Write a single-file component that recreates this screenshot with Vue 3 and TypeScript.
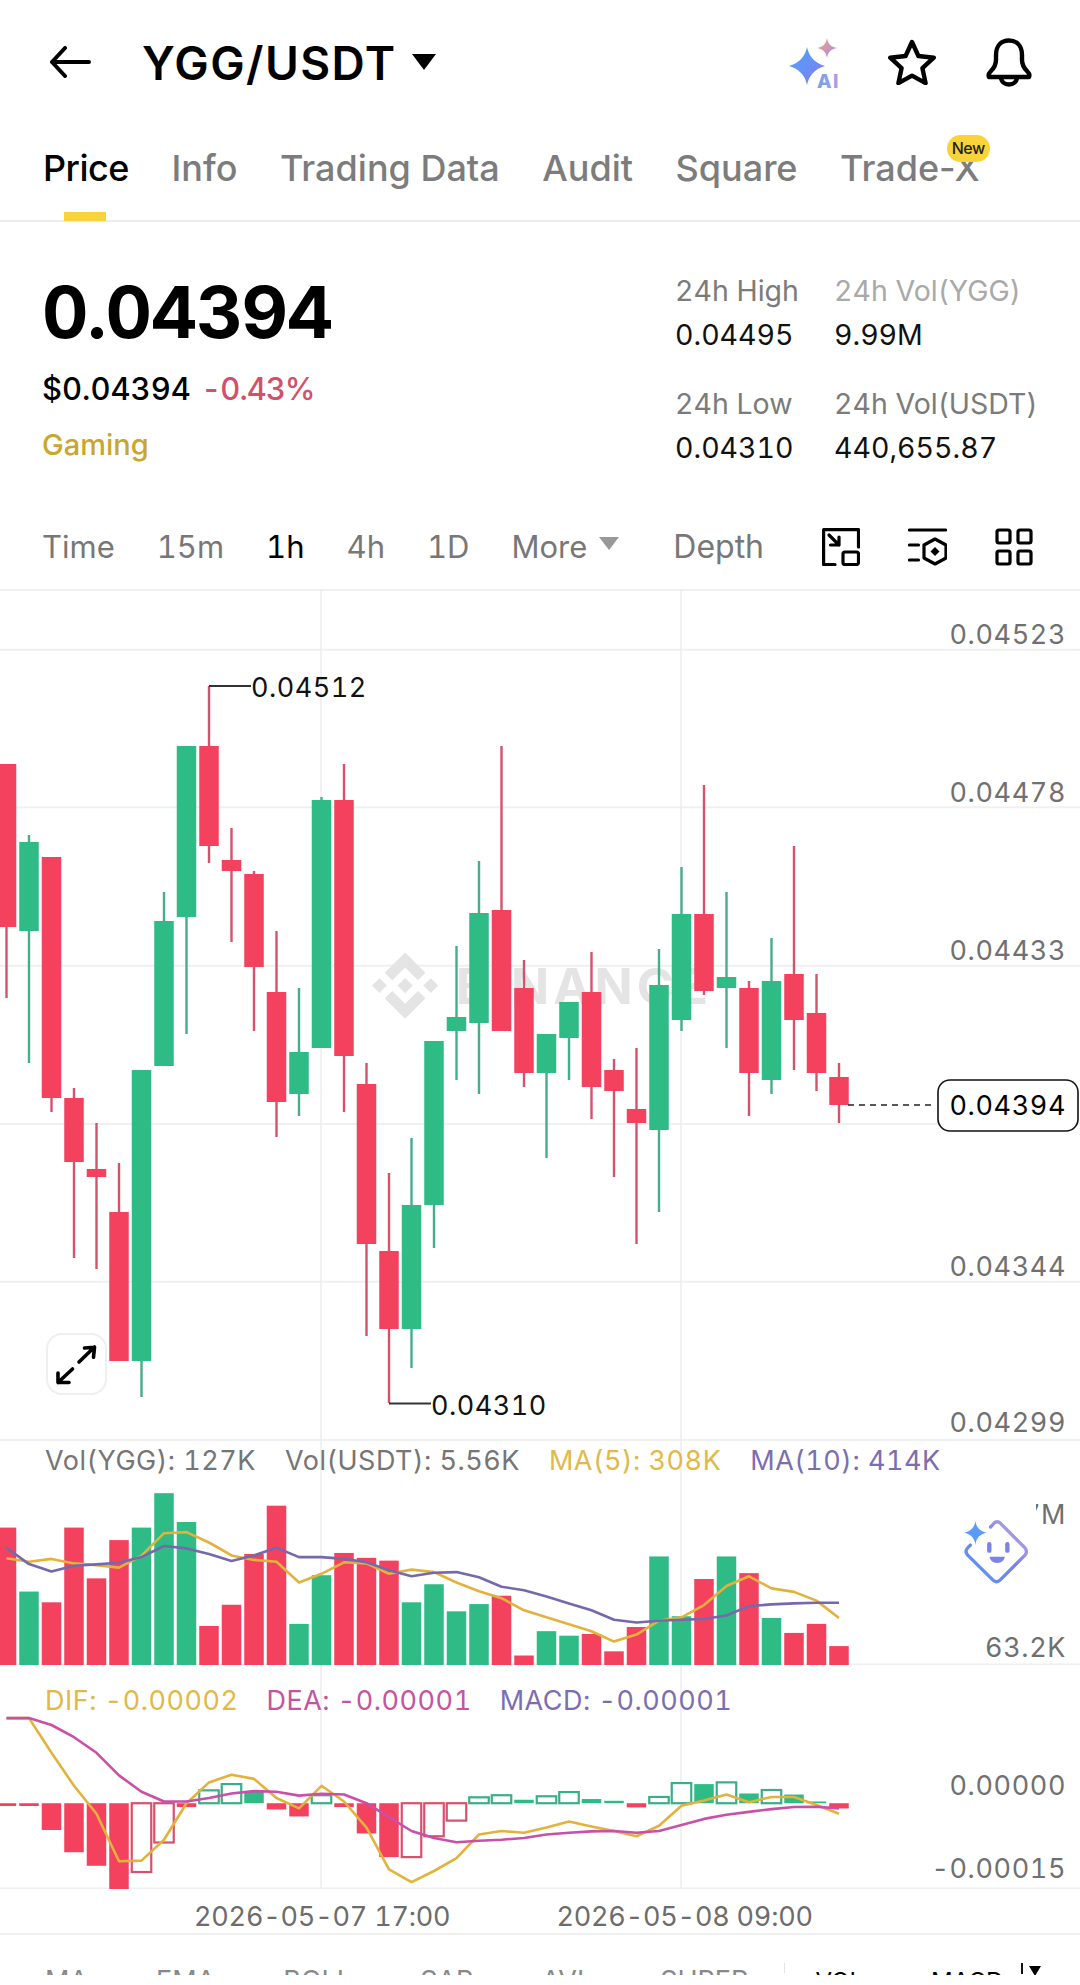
<script setup lang="ts">
  // [isUp, wickTop, bodyTop, bodyBottom, wickBottom], page y coordinates
  type Candle = [boolean, number, number, number, number]

  const candles: Candle[] = [
    [false, 764, 764, 927, 998],
    [true, 835, 842, 931, 1063],
    [false, 857, 857, 1098, 1112],
    [false, 1088, 1098, 1162, 1258],
    [false, 1123, 1169, 1177, 1269],
    [false, 1163, 1212, 1361, 1361],
    [true, 1070, 1070, 1361, 1397],
    [true, 892, 921, 1066, 1066],
    [true, 746, 746, 917, 1034],
    [false, 686, 746, 846, 863],
    [false, 828, 860, 871, 942],
    [false, 871, 874, 967, 1031],
    [false, 931, 992, 1102, 1137],
    [true, 988, 1052, 1094, 1116],
    [true, 797, 800, 1048, 1048],
    [false, 764, 800, 1056, 1112],
    [false, 1063, 1084, 1244, 1336],
    [false, 1173, 1251, 1329, 1403],
    [true, 1138, 1205, 1329, 1368],
    [true, 1041, 1041, 1205, 1248],
    [true, 946, 1017, 1031, 1080],
    [true, 861, 913, 1023, 1094],
    [false, 746, 910, 1031, 1031],
    [false, 960, 988, 1073, 1087],
    [true, 1034, 1034, 1073, 1158],
    [true, 1002, 1002, 1038, 1080],
    [false, 952, 992, 1087, 1119],
    [false, 1059, 1070, 1091, 1177],
    [false, 1048, 1109, 1123, 1244],
    [true, 949, 985, 1130, 1212],
    [true, 867, 914, 1020, 1031],
    [false, 785, 914, 991, 995],
    [true, 892, 977, 988, 1048],
    [false, 981, 988, 1073, 1116],
    [true, 938, 981, 1080, 1094],
    [false, 846, 974, 1020, 1070],
    [false, 974, 1013, 1073, 1091],
    [false, 1063, 1077, 1105, 1123]
  ]

  // the lower panes share one vertical scale, measured from y = 1440
  const py = (v: number) => 1440 + v / 2.877
  const cx = (i: number) => 6.5 + 22.5 * i
  const barWidth = 19.5

  const volTops = [
    252, 436, 467, 252, 398, 288, 252, 153, 236, 535, 474, 328, 189, 529, 389, 325, 339, 347, 467,
    415, 493, 472, 448, 620, 550, 563, 558, 608, 538, 335, 507, 400, 335, 383, 512, 555, 529, 593
  ]
  const ma5 = [
    340, 350, 342, 355, 360, 367, 333, 268, 265, 295, 332, 345, 350, 410, 385, 352, 355, 385, 373,
    380, 410, 435, 455, 490, 510, 530, 550, 580, 560, 520, 510, 475, 420, 392, 427, 437, 462, 512
  ]
  const ma10 = [
    310, 357, 378, 362, 358, 353, 337, 305, 312, 328, 348, 332, 310, 337, 337, 342, 352, 375, 392,
    382, 380, 395, 422, 432, 450, 470, 490, 517, 525, 520, 517, 515, 505, 478, 473, 470, 468, 468
  ]
  const dif = [
    800, 800, 900, 995, 1075, 1212, 1210, 1150, 1045, 985, 963, 975, 1030, 1060, 995, 1040, 1115,
    1235, 1272, 1240, 1203, 1135, 1125, 1130, 1115, 1098, 1112, 1125, 1140, 1110, 1052, 1037, 1020,
    1042, 1027, 1027, 1050, 1075
  ]
  const dea = [
    800, 800, 820, 855, 900, 965, 1012, 1040, 1040, 1030, 1017, 1010, 1012, 1023, 1018, 1020, 1045,
    1085, 1125, 1145, 1157, 1153, 1150, 1145, 1135, 1130, 1126, 1125, 1130, 1125, 1108, 1090, 1078,
    1070, 1062, 1056, 1055, 1060
  ]

  type HistKind = 'r' | 'g' | 'rh' | 'gh'
  const macdZero = 1045
  const hist: [number, HistKind][] = [
    [1053, 'r'], [1053, 'r'], [1122, 'r'], [1186, 'r'], [1225, 'r'], [1293, 'r'], [1243, 'rh'],
    [1158, 'rh'], [1056, 'r'], [1008, 'gh'], [990, 'gh'], [1012, 'g'], [1063, 'r'], [1083, 'r'],
    [1022, 'gh'], [1056, 'r'], [1132, 'r'], [1200, 'r'], [1200, 'rh'], [1140, 'rh'], [1095, 'rh'],
    [1028, 'gh'], [1022, 'gh'], [1035, 'g'], [1025, 'gh'], [1013, 'gh'], [1033, 'g'], [1038, 'g'],
    [1057, 'r'], [1027, 'gh'], [987, 'gh'], [990, 'g'], [985, 'gh'], [1017, 'g'], [1007, 'gh'],
    [1020, 'g'], [1040, 'g'], [1060, 'r']
  ]

  const line = (values: number[]) => values.map((v, i) => `${cx(i)},${py(v).toFixed(1)}`).join(' ')

  const priceGrid = [649.7, 807.3, 965.7, 1124, 1281.7]
  const priceAxis = [
    { y: 634, label: '0.04523' },
    { y: 792, label: '0.04478' },
    { y: 950, label: '0.04433' },
    { y: 1266, label: '0.04344' },
    { y: 1422, label: '0.04299' }
  ]

  const tabs = ['Price', 'Info', 'Trading Data', 'Audit', 'Square', 'Trade-X']
  const intervals = ['Time', '15m', '1h', '4h', '1D']
  const indicatorsLeft = ['MA', 'EMA', 'BOLL', 'SAR', 'AVL', 'SUPER']
</script>

<template>
  <div class="page">
    <header class="topbar">
      <svg class="back" width="41" height="32" viewBox="0 0 41 32" fill="none" stroke="#000" stroke-width="4" stroke-linecap="round" stroke-linejoin="round">
        <path d="M15 2 2 16l13 14M2 16h37" />
      </svg>
      <h1 class="pair">YGG/USDT</h1>
      <svg class="pair-caret" width="24" height="16" viewBox="0 0 24 16"><path d="M0 0h24L12 16z" fill="#000" /></svg>
      <svg class="ai" width="56" height="56" viewBox="0 0 56 56">
        <defs>
          <linearGradient id="aiBig" x1="0" y1="0" x2="1" y2="1">
            <stop offset="0" stop-color="#45a8fb" />
            <stop offset="1" stop-color="#8a78f0" />
          </linearGradient>
          <linearGradient id="aiSmall" x1="0" y1="0" x2="1" y2="1">
            <stop offset="0" stop-color="#f0a47c" />
            <stop offset="1" stop-color="#a98be8" />
          </linearGradient>
          <linearGradient id="aiText" x1="0" y1="0" x2="1" y2="0">
            <stop offset="0" stop-color="#6da4f0" />
            <stop offset="1" stop-color="#b59ae0" />
          </linearGradient>
        </defs>
        <path d="M19 9c2 10 8 16 18 19-10 3-16 9-18 19C17 37 11 31 1 28c10-3 16-9 18-19z" fill="url(#aiBig)" />
        <path d="M39 0c1 6 4 9 10 10-6 1-9 4-10 10-1-6-4-9-10-10 6-1 9-4 10-10z" fill="url(#aiSmall)" />
        <text class="ai-text" x="29" y="50" fill="url(#aiText)">AI</text>
      </svg>
      <svg class="star" width="48" height="46" viewBox="0 0 48 46" fill="none" stroke="#000" stroke-width="4.4" stroke-linejoin="round">
        <path d="M24 3l6.4 14 15.4 1.7-11.4 10.4 3.2 15L24 36.6 10.4 44.100l3.200-15L2.200 18.700 17.600 17z" />
      </svg>
      <svg class="bell" width="46" height="49" viewBox="0 0 46 49" fill="none" stroke="#000" stroke-width="4.4" stroke-linejoin="round">
        <path d="M3 39c-1-2 0-4 2-6 3-3 5-6 5-11v-5C10 8 15 2.500 23 2.500S36 8 36 17v5c0 5 2 8 5 11 2 2 3 4 2 6z" />
        <path d="M15 39c0 10 16 10 16 0" />
      </svg>
    </header>

    <nav class="tabs">
      <span v-for="(tab, i) in tabs" :key="tab" class="tab" :class="{ 'tab--active': i === 0 }">
        {{ tab }}
        <em v-if="tab === 'Trade-X'" class="tab-badge">New</em>
      </span>
    </nav>

    <section class="summary">
      <div class="summary-main">
        <div class="last-price">0.04394</div>
        <div class="sub-price">$0.04394 <span class="change">-0.43%</span></div>
        <div class="sector">Gaming</div>
      </div>
      <dl class="stats">
        <div class="stat">
          <dt>24h High</dt>
          <dd>0.04495</dd>
        </div>
        <div class="stat">
          <dt class="stat-light">24h Vol(YGG)</dt>
          <dd>9.99M</dd>
        </div>
        <div class="stat">
          <dt>24h Low</dt>
          <dd>0.04310</dd>
        </div>
        <div class="stat">
          <dt>24h Vol(USDT)</dt>
          <dd>440,655.87</dd>
        </div>
      </dl>
    </section>

    <div class="intervals">
      <span v-for="item in intervals" :key="item" :class="{ 'interval--active': item === '1h' }">{{ item }}</span>
      <span class="more">More<svg width="20" height="13" viewBox="0 0 20 13"><path d="M0 0h20L10 13z" fill="#999" /></svg></span>
      <span class="depth">Depth</span>
      <svg class="tool tool--first" width="38" height="38" viewBox="0 0 38 38" fill="none" stroke="#000" stroke-width="3.200" stroke-linecap="round" stroke-linejoin="round">
        <path d="M13 36.500H1.600V1.600H36.500V19" />
        <rect x="21" y="24" width="15.500" height="12.500" rx="2" />
        <path d="M7 7l10 10M17 9v8H8.500" />
      </svg>
      <svg class="tool" width="39" height="38" viewBox="0 0 39 38" fill="none" stroke="#000" stroke-width="3.200" stroke-linecap="round" stroke-linejoin="round">
        <path d="M1.500 2h36M1.500 17h9M1.500 32h9" />
        <path d="M27 11l11 6v13l-11 6-11-6V17z" />
        <path d="M27 19l4.500 4.500L27 28l-4.500-4.500z" fill="#000" stroke="none" />
      </svg>
      <svg class="tool" width="38" height="38" viewBox="0 0 38 38" fill="none" stroke="#000" stroke-width="3.200" stroke-linejoin="round">
        <rect x="2" y="2" width="13" height="13" rx="2" />
        <rect x="23" y="2" width="13" height="13" rx="2" />
        <rect x="2" y="23" width="13" height="13" rx="2" />
        <rect x="23" y="23" width="13" height="13" rx="2" />
      </svg>
    </div>

    <section class="pane pane--price">
      <svg width="1080" height="850" viewBox="0 589 1080 850">
        <line class="grid grid--top" x1="0" x2="1080" y1="589.500" y2="589.500" />
        <line v-for="y in priceGrid" :key="y" class="grid" x1="0" x2="1080" :y1="y" :y2="y" />
        <line class="grid-v" x1="321" x2="321" y1="589" y2="1439" />
        <line class="grid-v" x1="681" x2="681" y1="589" y2="1439" />

        <g fill="#e4e4e4" transform="translate(372 952.500) scale(0.523)">
          <path d="M38.730 53.200l24.590-24.580 24.600 24.600 14.300-14.310L63.320 0 24.430 38.900z" />
          <path d="M0 63.310l14.300-14.310 14.310 14.310-14.310 14.300z" />
          <path d="M38.730 73.410l24.590 24.590 24.600-24.600 14.310 14.290-38.900 38.910-38.910-38.880-.02-.02z" />
          <path d="M98 63.310l14.300-14.310 14.310 14.300-14.310 14.320z" />
          <path d="M77.830 63.300L63.320 48.780 52.590 59.510l-1.240 1.230-2.540 2.540 14.510 14.500 14.510-14.470z" />
        </g>
        <text class="watermark" x="456" y="1004">BINANCE</text>

        <g v-for="(c, i) in candles" :key="i">
          <line :class="c[0] ? 'wick-up' : 'wick-down'" :x1="cx(i)" :x2="cx(i)" :y1="c[1]" :y2="c[4]" />
          <rect :class="c[0] ? 'up' : 'down'" :x="cx(i) - barWidth / 2" :y="c[2]" :width="barWidth" :height="c[3] - c[2]" />
        </g>

        <path class="leader" d="M209 686H251" />
        <text class="mark" x="251" y="696.500">0.04512</text>
        <path class="leader" d="M389 1403.500H431" />
        <text class="mark" x="431" y="1414.500">0.04310</text>

        <text v-for="tick in priceAxis" :key="tick.label" class="axis" x="1066" :y="tick.y + 9.500">{{ tick.label }}</text>

        <path class="last-line" d="M848 1105H934" />
        <rect class="last-box" x="938" y="1080" width="140" height="51" rx="12" />
        <text class="axis axis--last" x="1066" y="1115">0.04394</text>
      </svg>
      <button class="expand" type="button">
        <svg width="61" height="61" viewBox="0 0 61 61" fill="none" stroke="#000" stroke-width="3.600" stroke-linecap="round" stroke-linejoin="round">
          <path d="M33 28l15.500-15M38.500 14l10-.8-1 10M26.500 35L12 48.500M12 39v9.500h11" />
        </svg>
      </button>
    </section>

    <section class="pane pane--vol">
      <svg width="1080" height="226" viewBox="0 1439 1080 226">
        <line class="grid" x1="0" x2="1080" y1="1440" y2="1440" />
        <line class="grid" x1="0" x2="1080" y1="1664.500" y2="1664.500" />
        <line class="grid-v" x1="321" x2="321" y1="1439" y2="1665" />
        <line class="grid-v" x1="681" x2="681" y1="1439" y2="1665" />
        <rect
          v-for="(top, i) in volTops"
          :key="i"
          :class="candles[i][0] ? 'up' : 'down'"
          :x="cx(i) - barWidth / 2"
          :y="py(top)"
          :width="barWidth"
          :height="1665 - py(top)"
        />
        <polyline class="curve curve--yellow" :points="line(ma5)" />
        <polyline class="curve curve--purple" :points="line(ma10)" />
        <text class="axis" x="1066" y="1524">7M</text>
        <text class="axis" x="1066" y="1657">63.2K</text>
      </svg>
      <div class="legend legend--vol">
        <span>Vol(YGG): 127K</span>
        <span>Vol(USDT): 5.56K</span>
        <span class="c-yellow">MA(5): 308K</span>
        <span class="c-purple">MA(10): 414K</span>
      </div>
      <div class="assistant">
        <svg width="72" height="72" viewBox="62 78 215 215" fill="none">
          <defs>
            <linearGradient id="faceEdge" x1="0" y1="1" x2="1" y2="0">
              <stop offset="0" stop-color="#4f9cf7" />
              <stop offset="0.55" stop-color="#7a80ea" />
              <stop offset="1" stop-color="#c7aee9" />
            </linearGradient>
          </defs>
          <path d="M150 108l10-11q10-9 20 0l73 73q9 12 0 22l-73 73q-12 12-24 0L82 192q-10-12 0-22l8-8" stroke="url(#faceEdge)" stroke-width="10" stroke-linecap="round" />
          <path d="M105 90c3 20 14 31 34 35-20 4-31 15-34 35-3-20-14-31-34-35 20-4 31-15 34-35z" fill="#5b9bf8" />
          <rect x="140" y="153" width="13" height="32" rx="6.500" fill="#7b82e8" />
          <rect x="194" y="153" width="13" height="32" rx="6.500" fill="#7b82e8" />
          <path d="M147 197h46q-3 18-23 18t-23-18z" fill="#7b82e8" />
        </svg>
      </div>
    </section>

    <section class="pane pane--macd">
      <svg width="1080" height="224" viewBox="0 1665 1080 224">
        <line class="grid-v" x1="321" x2="321" y1="1665" y2="1889" />
        <line class="grid-v" x1="681" x2="681" y1="1665" y2="1889" />
        <line class="grid" x1="0" x2="1080" y1="1888.500" y2="1888.500" />
        <g v-for="([end, kind], i) in hist" :key="i">
          <rect
            :class="`hist hist--${kind}`"
            :x="cx(i) - barWidth / 2"
            :y="py(Math.min(end, macdZero))"
            :width="barWidth"
            :height="Math.abs(py(end) - py(macdZero))"
          />
        </g>
        <polyline class="curve curve--yellow" :points="line(dif)" />
        <polyline class="curve curve--pink" :points="line(dea)" />
        <text class="axis" x="1066" y="1794.500">0.00000</text>
        <text class="axis" x="1066" y="1877.500">-0.00015</text>
      </svg>
      <div class="legend legend--macd">
        <span class="c-yellow">DIF: -0.00002</span>
        <span class="c-pink">DEA: -0.00001</span>
        <span class="c-purple">MACD: -0.00001</span>
      </div>
    </section>

    <div class="time-axis">
      <span>2026-05-07 17:00</span>
      <span>2026-05-08 09:00</span>
    </div>

    <div class="indicators">
      <span v-for="name in indicatorsLeft" :key="name">{{ name }}</span>
      <i class="indicators-sep" />
      <span class="indicator--on">VOL</span>
      <span class="indicator--on">MACD</span>
      <i class="indicators-bar" />
      <svg class="indicators-caret" width="12" height="10" viewBox="0 0 12 10"><path d="M0 0h12L6 10z" fill="#000" /></svg>
    </div>
  </div>
</template>

<style>
  html,
  body {
    margin: 0;
    background: #fff;
  }
</style>

<style scoped>
  .page {
    width: 1080px;
    height: 1985px;
    overflow: hidden;
    background: #fff;
    font-family: Inter, "Liberation Sans", sans-serif;
    font-variant-numeric: tabular-nums;
    color: #000;
  }

  /* Top bar */
  .topbar {
    display: flex;
    align-items: center;
    height: 124px;
    padding-left: 50px;
  }

  .pair {
    margin: 2px 0 0 51px;
    font-size: 46px;
    font-weight: 600;
    letter-spacing: 1.400px;
  }

  .pair-caret {
    margin-left: 16px;
  }

  .ai {
    margin-left: auto;
    margin-top: 8px;
  }

  .ai-text {
    font-size: 19px;
    font-weight: 800;
    letter-spacing: 1.500px;
  }

  .star {
    margin-left: 44px;
  }

  .bell {
    margin-left: 50px;
    margin-right: 48px;
  }

  /* Tabs */
  .tabs {
    display: flex;
    gap: 42.500px;
    height: 98px;
    padding-left: 43px;
    box-sizing: border-box;
    border-bottom: 2px solid #ecedef;
    font-size: 36px;
    font-variant-numeric: normal;
    line-height: 88px;
    color: #7c7c7c;
  }

  .tab {
    position: relative;
    font-weight: 500;
    white-space: nowrap;
  }

  .tab--active {
    letter-spacing: -0.500px;
    color: #000;
  }

  .tab--active::after {
    content: "";
    position: absolute;
    left: 21px;
    bottom: -1px;
    width: 42px;
    height: 9px;
    background: #f8d33a;
  }

  .tab-badge {
    position: absolute;
    right: -10px;
    top: 11px;
    width: 43px;
    height: 27px;
    border-radius: 14px;
    background: #f8d33a;
    color: #222;
    font-size: 16px;
    font-style: normal;
    font-weight: 500;
    line-height: 27px;
    letter-spacing: -0.5px;
    text-align: center;
  }

  /* Price summary */
  .summary {
    display: flex;
    justify-content: space-between;
    height: 282px;
  }

  .summary-main {
    padding: 54px 0 0 42px;
  }

  .last-price {
    font-size: 72px;
    font-weight: 700;
    line-height: 72px;
    letter-spacing: -1.200px;
  }

  .sub-price {
    margin-top: 23px;
    font-size: 31px;
    font-weight: 500;
    line-height: 36px;
  }

  .change {
    margin-left: 2px;
    letter-spacing: -1px;
    color: #d2506a;
  }

  .sector {
    margin-top: 21px;
    font-size: 29px;
    font-weight: 500;
    line-height: 34px;
    color: #c9a62f;
  }

  .stats {
    display: grid;
    grid-template-columns: 159px 246px;
    grid-auto-rows: 68px;
    row-gap: 0;
    margin: 0;
    padding-top: 51px;
    font-size: 28.500px;
    line-height: 36px;
  }

  .stat {
    height: 112px;
  }

  .stat:nth-child(n + 3) {
    margin-top: 45px;
  }

  .stat dt {
    color: #7b7b7b;
  }

  .stat dt.stat-light {
    color: #a9a9a9;
  }

  .stat dd {
    margin: 8px 0 0;
    color: #111;
  }

  /* Interval row */
  .intervals {
    display: flex;
    align-items: center;
    gap: 42px;
    height: 85px;
    padding-left: 42px;
    font-size: 31px;
    color: #777;
  }

  .interval--active {
    color: #000;
  }

  .more {
    display: flex;
    align-items: center;
    gap: 12px;
  }

  .more svg {
    margin-top: -6px;
  }

  .depth {
    margin-left: 12px;
    font-size: 32px;
  }

  .tool {
    margin-left: 6px;
  }

  .tool--first {
    margin-left: 16px;
  }

  /* Chart panes */
  .pane {
    position: relative;
  }

  .pane svg {
    display: block;
  }

  .pane--price {
    height: 850px;
  }

  .pane--vol {
    height: 226px;
  }

  .pane--macd {
    height: 224px;
  }

  .grid {
    stroke: #f0f0f1;
    stroke-width: 2;
  }

  .grid--top {
    stroke-width: 3;
  }

  .grid-v {
    stroke: #ededee;
    stroke-width: 1.500;
  }

  .watermark {
    font-size: 50px;
    font-weight: 700;
    letter-spacing: 4px;
    fill: #e4e4e4;
  }

  .up {
    fill: #2fbb85;
  }

  .down {
    fill: #f4425e;
  }

  .wick-up {
    stroke: #45ad89;
    stroke-width: 2.400;
  }

  .wick-down {
    stroke: #d6526c;
    stroke-width: 2.400;
  }

  .leader {
    fill: none;
    stroke: #333;
    stroke-width: 2;
  }

  .mark {
    font-size: 27px;
    fill: #111;
    letter-spacing: 0.500px;
  }

  .axis {
    font-size: 27px;
    fill: #707070;
    text-anchor: end;
    letter-spacing: 0.600px;
  }

  .axis--last {
    fill: #000;
  }

  .last-line {
    stroke: #222;
    stroke-width: 1.500;
    stroke-dasharray: 6 5;
  }

  .last-box {
    fill: #fff;
    stroke: #111;
    stroke-width: 1.600;
  }

  .expand {
    position: absolute;
    left: 46px;
    top: 744px;
    width: 61px;
    height: 62px;
    padding: 0;
    border: 2px solid #efefef;
    border-radius: 16px;
    background: #fff;
    box-sizing: border-box;
  }

  .expand svg {
    margin: -2px;
  }

  .curve {
    fill: none;
    stroke-width: 2.600;
    stroke-linejoin: round;
  }

  .curve--yellow {
    stroke: #e3b23c;
  }

  .curve--purple {
    stroke: #7668ac;
  }

  .curve--pink {
    stroke: #c94fa8;
  }

  .hist--r {
    fill: #f4425e;
  }

  .hist--g {
    fill: #2fbb85;
  }

  .hist--rh {
    fill: #fff;
    stroke: #d6526c;
    stroke-width: 2.200;
  }

  .hist--gh {
    fill: #fff;
    stroke: #3bae88;
    stroke-width: 2.200;
  }

  .legend {
    position: absolute;
    left: 45px;
    display: flex;
    font-size: 27px;
    line-height: 32px;
    letter-spacing: 0.500px;
    color: #757575;
    white-space: nowrap;
  }

  .legend--vol {
    top: 6px;
    gap: 29px;
  }

  .legend--macd {
    top: 20px;
    gap: 28px;
  }

  .c-yellow {
    color: #e0b94a;
  }

  .c-purple {
    color: #7b6eb0;
  }

  .c-pink {
    color: #c453a2;
  }

  .assistant {
    position: absolute;
    left: 950px;
    top: 60px;
    width: 86px;
    height: 90px;
    padding: 18px 0 0 11px;
    box-sizing: border-box;
    background: #fff;
  }

  /* Bottom of the chart */
  .time-axis {
    display: flex;
    height: 46px;
    box-sizing: border-box;
    padding-left: 194px;
    gap: 106px;
    border-bottom: 2px solid #f0f0f1;
    font-size: 27px;
    line-height: 56px;
    letter-spacing: -0.200px;
    white-space: nowrap;
    color: #6c6c6c;
  }

  .indicators {
    display: flex;
    height: 40px;
    padding: 0 0 0 45px;
    gap: 68px;
    box-sizing: border-box;
    overflow: hidden;
    align-items: flex-start;
    font-size: 27px;
    line-height: 26px;
    color: #888;
  }

  .indicators span {
    margin-top: 33px;
  }

  .indicators .indicator--on {
    margin-top: 34px;
    font-size: 24px;
    color: #000;
  }

  .indicators-sep {
    width: 1px;
    height: 10px;
    margin: 28px -38px 0 -32px;
    background: #e4e4e4;
  }

  .indicators-bar {
    width: 2px;
    height: 11px;
    margin: 28px 0 0 -50px;
    background: #111;
  }

  .indicators-caret {
    margin: 31px 0 0 -62px;
  }
</style>
